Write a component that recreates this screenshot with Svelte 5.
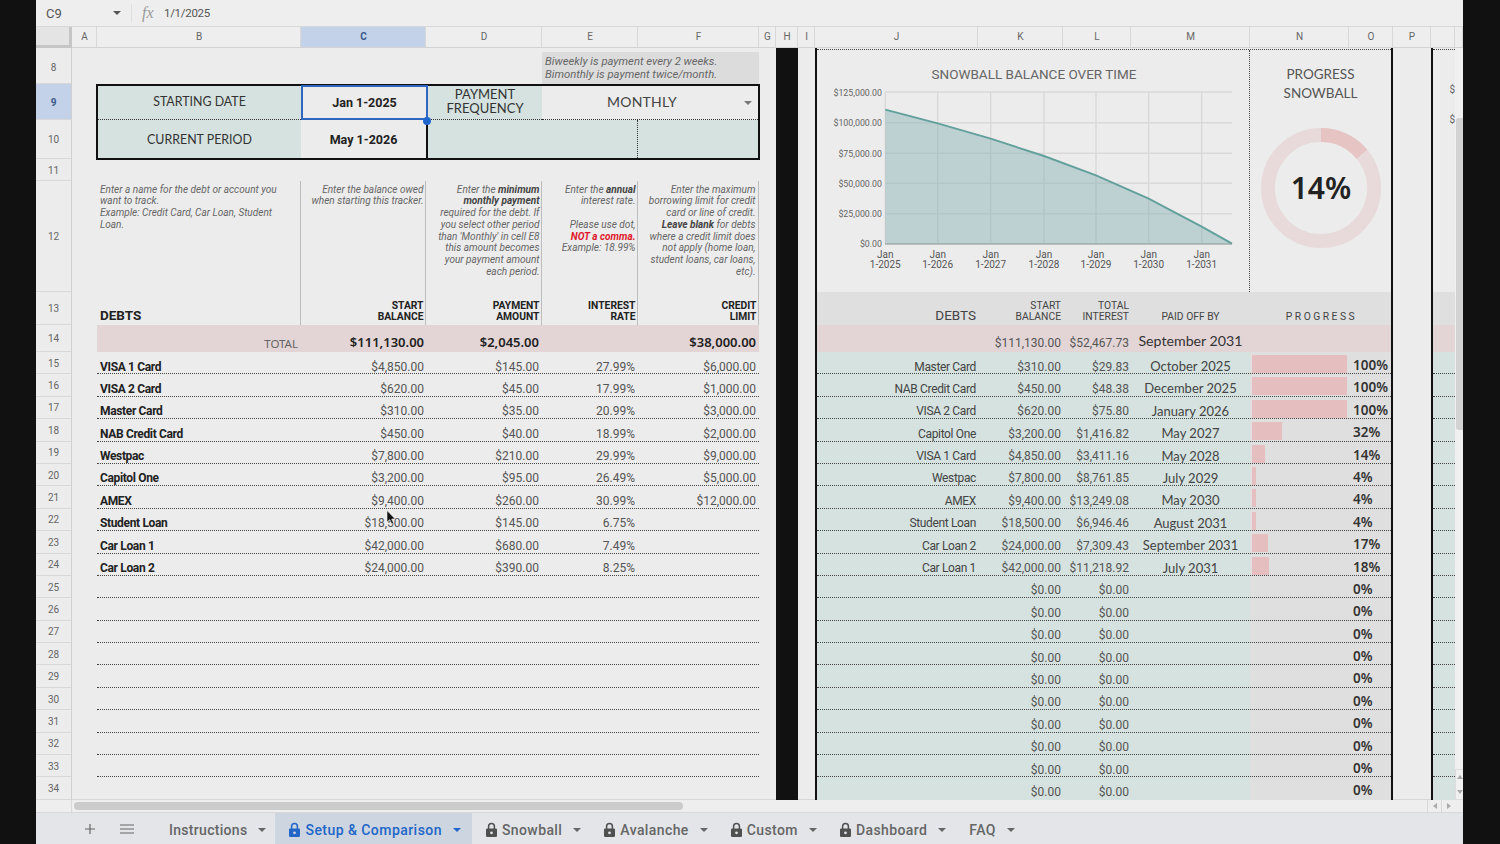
<script>
  const rowNums = Array.from({ length: 20 }, (_, i) => i + 15);
  const colHeads = ["", "A", "B", "C", "D", "E", "F", "G", "H", "I", "J", "K", "L", "M", "N", "O", "P", "", ""];

  const debts = [
    ["VISA 1 Card", "$4,850.00", "$145.00", "27.99%", "$6,000.00"],
    ["VISA 2 Card", "$620.00", "$45.00", "17.99%", "$1,000.00"],
    ["Master Card", "$310.00", "$35.00", "20.99%", "$3,000.00"],
    ["NAB Credit Card", "$450.00", "$40.00", "18.99%", "$2,000.00"],
    ["Westpac", "$7,800.00", "$210.00", "29.99%", "$9,000.00"],
    ["Capitol One", "$3,200.00", "$95.00", "26.49%", "$5,000.00"],
    ["AMEX", "$9,400.00", "$260.00", "30.99%", "$12,000.00"],
    ["Student Loan", "$18,500.00", "$145.00", "6.75%", ""],
    ["Car Loan 1", "$42,000.00", "$680.00", "7.49%", ""],
    ["Car Loan 2", "$24,000.00", "$390.00", "8.25%", ""],
    ...Array.from({ length: 10 }, () => ["", "", "", "", ""])
  ];

  const payoff = [
    ["Master Card", "$310.00", "$29.83", "October 2025", 100],
    ["NAB Credit Card", "$450.00", "$48.38", "December 2025", 100],
    ["VISA 2 Card", "$620.00", "$75.80", "January 2026", 100],
    ["Capitol One", "$3,200.00", "$1,416.82", "May 2027", 32],
    ["VISA 1 Card", "$4,850.00", "$3,411.16", "May 2028", 14],
    ["Westpac", "$7,800.00", "$8,761.85", "July 2029", 4],
    ["AMEX", "$9,400.00", "$13,249.08", "May 2030", 4],
    ["Student Loan", "$18,500.00", "$6,946.46", "August 2031", 4],
    ["Car Loan 2", "$24,000.00", "$7,309.43", "September 2031", 17],
    ["Car Loan 1", "$42,000.00", "$11,218.92", "July 2031", 18],
    ...Array.from({ length: 10 }, () => ["", "$0.00", "$0.00", "", 0])
  ];

  const yTicks = [
    ["$125,000.00", 92],
    ["$100,000.00", 122.7],
    ["$75,000.00", 153.3],
    ["$50,000.00", 183.3],
    ["$25,000.00", 213.7],
    ["$0.00", 243.7]
  ];
  const xTicks = [
    ["1-2025", 884.3],
    ["1-2026", 936.7],
    ["1-2027", 989.7],
    ["1-2028", 1043],
    ["1-2029", 1095],
    ["1-2030", 1147.7],
    ["1-2031", 1200.7]
  ];
  const curve = "884.3,109.7 936.7,123.3 989.7,138.7 1043,156 1095,175.3 1147.7,198.7 1200.7,226.7 1231,243.7";

  const tabs = [
    { name: "Setup & Comparison", lock: true, active: true },
    { name: "Snowball", lock: true },
    { name: "Avalanche", lock: true },
    { name: "Custom", lock: true },
    { name: "Dashboard", lock: true },
    { name: "FAQ" }
  ];

  // donut circumference for r=53
  const circ = 2 * Math.PI * 53;
</script>

<div class="page">
  <div class="app">
    <div class="formula-bar">
      <span class="cell-ref">C9</span>
      <i class="caret ref-caret"></i>
      <span class="fb-sep"></span>
      <span class="fx">fx</span>
      <span class="fb-value">1/1/2025</span>
    </div>

    <div class="col-heads">
      {#each colHeads as c, i}
        <div class="col-head" class:corner={i === 0} class:sel={c === "C"}>{c}</div>
      {/each}
    </div>

    <div class="body">
      <div class="row-heads">
        <div class="rh h8">8</div>
        <div class="rh h9 sel">9</div>
        <div class="rh h10">10</div>
        <div class="rh h11">11</div>
        <div class="rh h12">12</div>
        <div class="rh h13">13</div>
        <div class="rh h14">14</div>
        {#each rowNums as n}
          <div class="rh hd">{n}</div>
        {/each}
      </div>

      <div class="gutter-a"></div>

      <div class="left">
        <div class="row8">
          <div class="hint">Biweekly is payment every 2 weeks.<br />Bimonthly is payment twice/month.</div>
        </div>

        <div class="box">
          <div class="box-row r1">
            <div class="bc teal lex dot">STARTING DATE</div>
            <div class="bc selected">Jan 1-2025</div>
            <div class="bc teal lex dot small">PAYMENT<br />FREQUENCY</div>
            <div class="bc lex dot monthly">MONTHLY<i class="caret month-caret"></i></div>
          </div>
          <div class="box-row r2">
            <div class="bc teal lex">CURRENT PERIOD</div>
            <div class="bc period">May 1-2026</div>
            <div class="bc teal wide"></div>
            <div class="bc teal dot-left"></div>
          </div>
          <span class="handle"></span>
        </div>

        <div class="row11"></div>

        <div class="grid-row notes">
          <div class="note l">Enter a name for the debt or account you<br />want to track.<br />Example: Credit Card, Car Loan, Student<br />Loan.</div>
          <div class="note">Enter the balance owed<br />when starting this tracker.</div>
          <div class="note">Enter the <b>minimum</b><br /><b>monthly payment</b><br />required for the debt. If<br />you select other period<br />than 'Monthly' in cell E8<br />this amount becomes<br />your payment amount<br />each period.</div>
          <div class="note">Enter the <b>annual</b><br />interest rate.<br /><br />Please use dot,<br /><b class="warn">NOT a comma.</b><br />Example: 18.99%</div>
          <div class="note">Enter the maximum<br />borrowing limit for credit<br />card or line of credit.<br /><b>Leave blank</b> for debts<br />where a credit limit does<br />not apply (home loan,<br />student loans, car loans,<br />etc).</div>
        </div>

        <div class="grid-row heads">
          <div class="debts-title">DEBTS</div>
          <div class="th">START<br />BALANCE</div>
          <div class="th">PAYMENT<br />AMOUNT</div>
          <div class="th">INTEREST<br />RATE</div>
          <div class="th">CREDIT<br />LIMIT</div>
        </div>

        <div class="grid-row total">
          <div class="total-label">TOTAL</div>
          <div class="total-val">$111,130.00</div>
          <div class="total-val">$2,045.00</div>
          <div></div>
          <div class="total-val">$38,000.00</div>
        </div>

        {#each debts as d, i}
          <div class="grid-row debt" class:last={i === debts.length - 1}>
            <div class="name">{d[0]}</div>
            <div class="num">{d[1]}</div>
            <div class="num">{d[2]}</div>
            <div class="num">{d[3]}</div>
            <div class="num">{d[4]}</div>
          </div>
        {/each}
      </div>

      <div class="gutter-g"></div>
      <div class="col-black"></div>
      <div class="gutter-g"></div>

      <div class="right">
        <div class="right-top">
          <div class="chart-box">
            <svg viewBox="816 50 433 242" width="433" height="242">
              <text x="1033" y="78.5" class="chart-title" text-anchor="middle">SNOWBALL BALANCE OVER TIME</text>
              {#each yTicks as t}
                <line x1="884" x2="1231" y1={t[1]} y2={t[1]} class="gridline" />
                <text x="881" y={t[1] + 3.5} class="tick" text-anchor="end">{t[0]}</text>
              {/each}
              {#each xTicks as t}
                <line x1={t[1]} x2={t[1]} y1="92" y2="244" class="gridline" />
                <text x={t[1]} y="258" class="xtick" text-anchor="middle">Jan</text>
                <text x={t[1]} y="268" class="xtick" text-anchor="middle">{t[0]}</text>
              {/each}
              <polygon points="884.3,243.7 {curve}" fill="#7aa9ad" fill-opacity="0.4" />
              <polyline points={curve} fill="none" stroke="#62a09c" stroke-width="1.9" />
              <line x1="884" x2="1231" y1="244" y2="244" stroke="#8d9a9a" stroke-width="1" />
            </svg>
          </div>
          <div class="donut-box">
            <div class="donut-title">PROGRESS<br />SNOWBALL</div>
            <svg viewBox="0 0 120 120" width="120" height="120" class="donut">
              <circle cx="60" cy="60" r="53" fill="none" stroke="#e8dadb" stroke-width="14" />
              <circle cx="60" cy="60" r="53" fill="none" stroke="#e6c4c4" stroke-width="14"
                stroke-dasharray="{circ * 0.14} {circ}" transform="rotate(-90 60 60)" />
              <text x="60" y="71" text-anchor="middle" class="donut-num">14%</text>
            </svg>
          </div>
        </div>

        <div class="pay-row pay-head">
          <div class="ph-debts">DEBTS</div>
          <div class="ph">START<br />BALANCE</div>
          <div class="ph">TOTAL<br />INTEREST</div>
          <div class="ph center">PAID OFF BY</div>
          <div class="ph progress">PROGRESS</div>
        </div>

        <div class="pay-row pay-total">
          <div></div>
          <div class="pnum">$111,130.00</div>
          <div class="pnum">$52,467.73</div>
          <div class="pdate big">September 2031</div>
          <div></div>
          <div></div>
        </div>

        {#each payoff as p, i}
          <div class="pay-row pay" class:last={i === payoff.length - 1}>
            <div class="pname">{p[0]}</div>
            <div class="pnum">{p[1]}</div>
            <div class="pnum">{p[2]}</div>
            <div class="pdate">{p[3]}</div>
            <div class="pbar-cell">
              <div class="pbar" style="width: {p[4] * 0.95}px"></div>
            </div>
            <div class="ppct">{p[4]}%</div>
          </div>
        {/each}
      </div>

      <div class="col-p"></div>

      <div class="col-q">
        <div class="q-top"><span>$</span><span>$</span></div>
        <div class="q-head"></div>
        <div class="q-total"></div>
        {#each rowNums as n, i}
          <div class="q-row" class:last={i === rowNums.length - 1}></div>
        {/each}
      </div>

      <div class="vscroll">
        <div class="v-thumb"></div>
        <div class="v-arrows">
          <span class="v-up"></span>
          <span class="v-down"></span>
        </div>
      </div>

      <svg class="cursor" viewBox="0 0 10 15" width="10" height="15">
        <path d="M1 0.5 L1 12 L3.8 9.6 L5.8 14 L7.6 13.2 L5.7 9 L9.2 9 Z" fill="#111" stroke="#eee" stroke-width="0.6" />
      </svg>
    </div>

    <div class="hscroll">
      <div class="h-corner"></div>
      <div class="h-track"><div class="h-thumb"></div></div>
      <div class="h-btn"><i class="tri-l"></i></div>
      <div class="h-btn"><i class="tri-r"></i></div>
    </div>

    <div class="tabbar">
      <span class="tb-btn plus">
        <svg viewBox="0 0 10 10" width="10" height="10"><path d="M5 0v10M0 5h10" stroke="#666" stroke-width="1.2" fill="none" /></svg>
      </span>
      <span class="tb-btn burger">
        <svg viewBox="0 0 14 10" width="14" height="10"><path d="M0 1h14M0 5h14M0 9h14" stroke="#666" stroke-width="1.2" fill="none" /></svg>
      </span>
      <div class="tab"><span>Instructions</span><i class="caret"></i></div>
      {#each tabs as t}
        <div class="tab" class:active={t.active}>
          {#if t.lock}
            <svg class="lock" viewBox="0 0 11 15" width="11" height="15">
              <path d="M2.6 7V4.4a2.9 2.9 0 0 1 5.8 0V7" fill="none" stroke="currentColor" stroke-width="1.5" />
              <path fill-rule="evenodd" d="M1.2 6.4h8.6q1.2 0 1.2 1.2v6.2q0 1.2-1.2 1.2H1.2Q0 15 0 13.8V7.6q0-1.2 1.2-1.2zM5.5 9.4a1.4 1.4 0 1 0 0 2.8a1.4 1.4 0 1 0 0-2.8z" fill="currentColor" />
            </svg>
          {/if}
          <span>{t.name}</span><i class="caret"></i>
        </div>
      {/each}
    </div>
  </div>
</div>

<style>
  :global(body) {
    margin: 0;
    background: #111;
  }

  .page {
    width: 1500px;
    height: 844px;
    background: #111;
    padding: 0 37px 0 36px;
    box-sizing: border-box;
    overflow: hidden;
    font-family: Roboto, "Liberation Sans", sans-serif;
    color: #444;
  }

  .app {
    display: flex;
    flex-direction: column;
    height: 844px;
    background: #ececec;
  }

  /* carets */
  .caret {
    display: inline-block;
    width: 0;
    height: 0;
    border-left: 4px solid transparent;
    border-right: 4px solid transparent;
    border-top: 4px solid #666;
  }

  .formula-bar {
    height: 27px;
    flex: none;
    box-sizing: border-box;
    border-bottom: 1px solid #d8d8d8;
    display: flex;
    align-items: center;
    background: #eee;
    color: #555;
  }

  .cell-ref {
    margin-left: 10px;
    width: 67px;
    font-size: 13px;
  }

  .ref-caret {
    border-top-color: #555;
  }

  .fb-sep {
    width: 1px;
    height: 18px;
    background: #e0e0e0;
    margin: 0 10px 0 10px;
  }

  .fx {
    font-family: "Liberation Serif", serif;
    font-style: italic;
    font-size: 16px;
    color: #999;
    width: 22px;
  }

  .fb-value {
    font-size: 11.5px;
    letter-spacing: -0.3px;
  }

  .col-heads {
    flex: none;
    height: 21px;
    box-sizing: border-box;
    display: grid;
    grid-template-columns: 36px 25px 204px 125px 116px 96px 121px 17px 22px 17px 163px 85px 68px 119px 99px 44px 38px 24px 8px;
    border-bottom: 1px solid #d2d2d2;
    background: #eee;
  }

  .col-head {
    border-right: 1px solid #d8d8d8;
    padding-left: 1px;
    font-size: 10px;
    line-height: 20px;
    text-align: center;
    color: #666;
  }

  .col-head.corner {
    padding-left: 0;
    background: #e4e4e4;
    border-right: 3px solid #c6c6c6;
    border-bottom: 3px solid #c6c6c6;
    margin-bottom: -1px;
  }

  .col-head.sel {
    background: #c3d2e8;
    color: #3a5a8a;
    font-weight: 700;
  }

  .body {
    flex: none;
    height: 752px;
    display: flex;
    overflow: hidden;
    position: relative;
  }

  .row-heads {
    flex: none;
    width: 36px;
    box-sizing: border-box;
    border-right: 1px solid #d0d0d0;
  }

  .rh {
    display: flex;
    align-items: center;
    justify-content: center;
    box-sizing: border-box;
    border-bottom: 1px solid #d8d8d8;
    padding-top: 1px;
    font-size: 10px;
    color: #666;
  }

  .rh.sel {
    background: #c3d2e8;
    color: #3a5a8a;
    font-weight: 700;
  }

  .h8 { height: 36px; padding-top: 4px; }
  .h9 { height: 36px; }
  .h10 { height: 39px; }
  .h11 { height: 22px; }
  .h12 { height: 111px; }
  .h13 { height: 33px; }
  .h14 { height: 27px; }
  .hd { height: 22.4px; }

  .gutter-a {
    flex: none;
    width: 25px;
  }

  .left {
    flex: none;
    width: 662px;
  }

  .row8 {
    height: 36px;
    display: flex;
    justify-content: flex-end;
    align-items: flex-end;
  }

  .hint {
    width: 214px;
    height: 29px;
    padding: 3px 0 0 3px;
    background: #dcdcdc;
    font-style: italic;
    font-size: 11.25px;
    line-height: 13px;
    color: #666;
  }

  .box {
    position: relative;
    margin: 0 -1px;
    border: 2px solid #111;
    height: 72px;
    box-sizing: content-box;
  }

  .box-row {
    display: grid;
    grid-template-columns: 203px 127px 114px 95px 121px;
  }

  .r1 { height: 34px; }
  .r2 { height: 38px; }

  .bc {
    display: flex;
    align-items: center;
    justify-content: center;
    text-align: center;
    box-sizing: border-box;
    font-size: 12.4px;
    color: #333;
  }

  .r1 .lex {
    padding-bottom: 2px;
  }

  .teal {
    background: #d5e2df;
  }

  .lex {
    font-family: Lato, "Noto Sans", sans-serif;
  }

  .dot {
    border-bottom: 1px dotted #333;
  }

  .small {
    font-size: 13px;
    line-height: 13.5px;
  }

  .monthly {
    grid-column: span 2;
    position: relative;
    font-size: 14px;
    letter-spacing: 0.2px;
    color: #444;
    padding-right: 16px;
  }

  .month-caret {
    position: absolute;
    right: 6px;
    top: 15px;
    border-top-color: #777;
  }

  .selected {
    margin-top: -1px;
    border: 2px solid #2f66bf;
    font-weight: 700;
    font-size: 12.5px;
    color: #222;
  }

  .period {
    font-weight: 700;
    font-size: 12.5px;
    color: #222;
    width: 127px;
    border-right: 2px solid #111;
  }

  .wide {
    grid-column: span 2;
  }

  .dot-left {
    border-left: 1px dotted #333;
  }

  .handle {
    position: absolute;
    left: 325px;
    top: 31px;
    width: 8px;
    height: 8px;
    border-radius: 50%;
    background: #1f66cf;
  }

  .row11 {
    height: 21px;
  }

  .grid-row {
    display: grid;
    grid-template-columns: 204px 125px 116px 96px 121px;
  }

  .notes {
    height: 111px;
  }

  .note {
    box-sizing: border-box;
    border-right: 1px solid #bdbdbd;
    padding: 2.5px 1.5px 0 0;
    font-style: italic;
    font-size: 10.05px;
    line-height: 11.8px;
    text-align: right;
    color: #666;
  }

  .note:last-child {
    padding-right: 2.5px;
  }

  .note.l {
    text-align: left;
    padding-left: 3px;
  }

  .note b {
    color: #444;
  }

  .note .warn {
    color: #e0182a;
  }

  .heads {
    height: 33px;
  }

  .debts-title {
    box-sizing: border-box;
    border-right: 1px solid #bdbdbd;
    padding: 15px 0 0 3px;
    font-size: 13.5px;
    line-height: 16px;
    font-weight: 700;
    color: #222;
  }

  .th {
    box-sizing: border-box;
    border-right: 1px solid #bdbdbd;
    padding: 8px 1.5px 0 0;
    font-size: 10.3px;
    line-height: 11px;
    font-weight: 700;
    text-align: right;
    color: #222;
  }

  .total {
    height: 27px;
    background: #e3d5d6;
    align-items: center;
  }

  .total-label {
    text-align: right;
    padding: 9px 3px 0 0;
    font-family: "Noto Sans", sans-serif;
    font-size: 11.5px;
    color: #666;
  }

  .total-val {
    text-align: right;
    padding: 6px 3px 0 0;
    font-family: "Noto Sans", sans-serif;
    font-weight: 600;
    font-size: 13px;
    color: #222;
  }

  .total-val:nth-child(2) {
    padding-right: 2px;
  }

  .debt {
    height: 22.4px;
    box-sizing: border-box;
    border-bottom: 1px dotted #444;
    font-size: 12px;
    line-height: 13px;
    padding-top: 8.5px;
  }

  .debt.last {
    border-bottom: none;
  }

  .name {
    padding-left: 3px;
    font-weight: 700;
    letter-spacing: -0.35px;
    color: #222;
  }

  .num {
    text-align: right;
    padding-right: 3px;
    color: #555;
  }

  .num:nth-child(2) {
    padding-right: 2px;
  }

  .gutter-g {
    flex: none;
    width: 17px;
  }

  .col-black {
    flex: none;
    width: 22px;
    background: #111;
  }

  .right {
    flex: none;
    width: 578px;
    box-sizing: border-box;
    border-left: 2px solid #111;
    border-right: 2px solid #111;
  }

  .right-top {
    display: flex;
    height: 243px;
    margin-top: 1px;
    border-top: 1px dotted #444;
    box-sizing: border-box;
  }

  .chart-box {
    flex: none;
    width: 432px;
    overflow: hidden;
  }

  .chart-box svg {
    display: block;
  }

  .chart-title {
    font-size: 13.5px;
    fill: #666;
  }

  .gridline {
    stroke: #d9d9d9;
    stroke-width: 1.4;
  }

  .tick {
    font-size: 8.8px;
    fill: #666;
  }

  .xtick {
    font-size: 10px;
    fill: #555;
  }

  .donut-box {
    flex: 1;
    border-left: 1px dotted #444;
    display: flex;
    flex-direction: column;
    align-items: center;
  }

  .donut-title {
    margin-top: 15px;
    font-family: Lato, "Noto Sans", sans-serif;
    font-size: 13.5px;
    line-height: 19px;
    text-align: center;
    color: #555;
  }

  .donut {
    margin-top: 25px;
  }

  .donut-num {
    font-family: "Noto Sans", sans-serif;
    font-weight: 600;
    font-size: 30px;
    fill: #222;
  }

  .pay-row {
    display: grid;
    grid-template-columns: 161px 85px 68px 119px 99px 42px;
  }

  .pay-head {
    height: 33px;
    background: #dfdfdf;
  }

  .ph-debts {
    font-size: 13.5px;
    line-height: 16px;
    padding: 15px 2px 0 0;
    text-align: right;
    color: #444;
  }

  .ph {
    font-size: 10.3px;
    line-height: 11px;
    padding: 8px 2px 0 0;
    text-align: right;
    color: #444;
  }

  .ph.center {
    text-align: center;
    padding: 19px 0 0;
  }

  .ph.progress {
    grid-column: span 2;
    text-align: center;
    padding: 19px 0 0 2px;
    letter-spacing: 2.5px;
  }

  .pay-total {
    height: 27px;
    background: #e3d5d6;
    align-items: center;
  }

  .pay {
    height: 22.4px;
    box-sizing: border-box;
    border-bottom: 1px dotted #444;
    font-size: 12px;
    line-height: 13px;
    background: linear-gradient(to right, #d5e2df 433px, #dfdfdf 433px);
  }

  .pay.last {
    border-bottom: none;
  }

  .pname {
    text-align: right;
    padding: 8.5px 2px 0 0;
    letter-spacing: -0.35px;
    color: #444;
  }

  .pnum {
    text-align: right;
    padding: 8.5px 2px 0 0;
    font-size: 12px;
    color: #555;
  }

  .pdate {
    text-align: center;
    padding-top: 7px;
    font-family: Lato, "Noto Sans", sans-serif;
    font-size: 13px;
    line-height: 14px;
    color: #444;
  }

  .pdate.big {
    padding-top: 5px;
    font-size: 14.2px;
    line-height: 18px;
    color: #333;
  }

  .pbar-cell {
    padding: 3px 0 1px 2px;
  }

  .pbar {
    height: 100%;
    background: #e5bfbf;
  }

  .ppct {
    padding: 5px 0 0 4px;
    font-family: "Noto Sans", sans-serif;
    font-weight: 600;
    font-size: 13.5px;
    line-height: 17px;
    white-space: nowrap;
    color: #333;
  }

  .col-p {
    flex: none;
    width: 38px;
  }

  .col-q {
    flex: none;
    width: 24px;
    box-sizing: border-box;
    border-left: 2px solid #111;
  }

  .q-top {
    height: 243px;
    margin-top: 1px;
    box-sizing: border-box;
    border-top: 1px dotted #444;
    padding-top: 33px;
    display: flex;
    flex-direction: column;
    align-items: flex-end;
    gap: 16px;
    font-size: 10px;
    line-height: 14px;
    color: #666;
  }

  .q-head {
    height: 33px;
    background: #dfdfdf;
  }

  .q-total {
    height: 27px;
    background: #e3d5d6;
  }

  .q-row {
    height: 22.4px;
    box-sizing: border-box;
    border-bottom: 1px dotted #444;
    background: #d5e2df;
  }

  .q-row.last {
    border-bottom: none;
  }

  .vscroll {
    flex: none;
    width: 8px;
    background: #f0f0f0;
    display: flex;
    flex-direction: column;
  }

  .v-thumb {
    height: 312px;
    margin: 70px 0 0 1px;
    background: #d2d2d2;
    border-radius: 3px 0 0 3px;
  }

  .v-arrows {
    margin-top: auto;
    height: 29px;
    border: 1px solid #dcdcdc;
    border-right: none;
    display: flex;
    flex-direction: column;
    justify-content: space-around;
    align-items: center;
  }

  .v-up {
    border-left: 3px solid transparent;
    border-right: 3px solid transparent;
    border-bottom: 4px solid #aaa;
  }

  .v-down {
    border-left: 3px solid transparent;
    border-right: 3px solid transparent;
    border-top: 4px solid #aaa;
  }

  .cursor {
    position: absolute;
    left: 350px;
    top: 462px;
  }

  .hscroll {
    flex: none;
    height: 12px;
    box-sizing: content-box;
    display: flex;
    border-top: 1px solid #d8d8d8;
    border-bottom: 1px solid #d8d8d8;
    margin-top: -1px;
    background: #eee;
  }

  .h-corner {
    width: 36px;
    box-sizing: border-box;
    border-right: 1px solid #d8d8d8;
  }

  .h-track {
    width: 1355px;
  }

  .h-thumb {
    width: 609px;
    height: 8px;
    margin: 2px 0 0 2px;
    border-radius: 4px;
    background: #cbcbcb;
  }

  .h-btn {
    width: 14px;
    box-sizing: border-box;
    border-left: 1px solid #d8d8d8;
    display: flex;
    align-items: center;
    justify-content: center;
  }

  .tri-l {
    border-top: 3px solid transparent;
    border-bottom: 3px solid transparent;
    border-right: 4px solid #aaa;
  }

  .tri-r {
    border-top: 3px solid transparent;
    border-bottom: 3px solid transparent;
    border-left: 4px solid #aaa;
  }

  .tabbar {
    flex: 1;
    display: flex;
    align-items: stretch;
    background: #e3e5e9;
  }

  .tb-btn {
    display: flex;
    align-items: center;
  }

  .plus {
    margin-left: 49px;
  }

  .burger {
    margin-left: 25px;
    margin-right: 21px;
  }

  .tab {
    display: flex;
    align-items: center;
    gap: 11px;
    padding: 2px 9px 0 14px;
    font-size: 14px;
    font-weight: 500;
    letter-spacing: 0.4px;
    color: #666;
  }

  .tab:first-of-type {
    letter-spacing: 0.3px;
  }

  .tab.active {
    background: #cdd5e0;
    padding-right: 11px;
    letter-spacing: 0.45px;
    color: #2266c8;
  }

  .tab.active .caret {
    border-top-color: #2266c8;
  }

  .lock {
    margin-right: -6px;
    margin-bottom: 1px;
    color: #505050;
  }

  .tab.active .lock {
    color: #2266c8;
  }
</style>
